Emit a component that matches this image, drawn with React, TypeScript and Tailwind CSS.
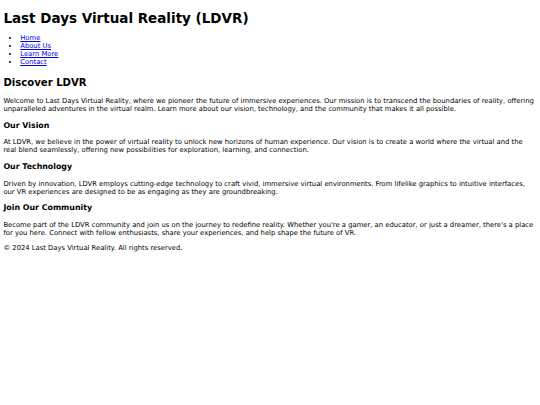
import React from "react";

export default function App() {
  return (
    <div className="bg-white min-h-[405px] flow-root">
      <div className="m-[3.375px] text-black text-[6.8px] leading-[7.97px] font-['DejaVu_Sans',Verdana,sans-serif]">
        <header>
          <h1 className="text-[13.5px] font-bold mt-[9.6px] mb-[9.9px] leading-[normal]">
            Last Days Virtual Reality (LDVR)
          </h1>
          <nav>
            <ul className="list-disc pl-[16.875px] my-[6.85px]">
              <li>
                <a href="#" className="text-[#0000ee] underline">Home</a>
              </li>
              <li>
                <a href="#" className="text-[#0000ee] underline">About Us</a>
              </li>
              <li>
                <a href="#" className="text-[#0000ee] underline">Learn More</a>
              </li>
              <li>
                <a href="#" className="text-[#0000ee] underline">Contact</a>
              </li>
            </ul>
          </nav>
        </header>
        <main>
          <section>
            <h2 className="text-[10.125px] font-bold mt-[9.4px] mb-[10px] leading-[normal]">Discover LDVR</h2>
            <p className="my-[6.85px]">
              Welcome to Last Days Virtual Reality, where we pioneer the future of immersive experiences. Our mission is to transcend the boundaries of reality, offering unparalleled adventures in the virtual realm. Learn more about our vision, technology, and the community that makes it all possible.
            </p>
          </section>
          <section>
            <h3 className="text-[7.8975px] font-bold mt-[6.9px] mb-[9.6px] leading-[normal]">Our Vision</h3>
            <p className="my-[6.85px]">
              At LDVR, we believe in the power of virtual reality to unlock new horizons of human experience. Our vision is to create a world where the virtual and the real blend seamlessly, offering new possibilities for exploration, learning, and connection.
            </p>
          </section>
          <section>
            <h3 className="text-[7.8975px] font-bold mt-[6.9px] mb-[9.6px] leading-[normal]">Our Technology</h3>
            <p className="my-[6.85px]">
              Driven by innovation, LDVR employs cutting-edge technology to craft vivid, immersive virtual environments. From lifelike graphics to intuitive interfaces, our VR experiences are designed to be as engaging as they are groundbreaking.
            </p>
          </section>
          <section>
            <h3 className="text-[7.8975px] font-bold mt-[6.9px] mb-[9.6px] leading-[normal]">Join Our Community</h3>
            <p className="my-[6.85px]">
              Become part of the LDVR community and join us on the journey to redefine reality. Whether you're a gamer, an educator, or just a dreamer, there's a place for you here. Connect with fellow enthusiasts, share your experiences, and help shape the future of VR.
            </p>
          </section>
        </main>
        <footer>
          <p className="my-[6.85px]">© 2024 Last Days Virtual Reality. All rights reserved.</p>
        </footer>
      </div>
    </div>
  );
}
